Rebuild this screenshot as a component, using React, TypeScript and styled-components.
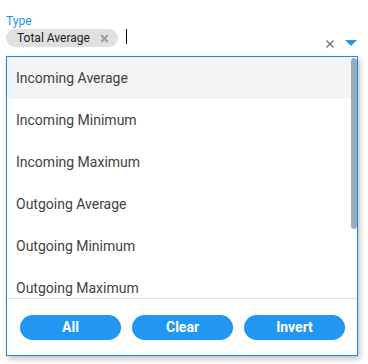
import styled, {createGlobalStyle} from 'styled-components'

const options = [
  'Incoming Average',
  'Incoming Minimum',
  'Incoming Maximum',
  'Outgoing Average',
  'Outgoing Minimum',
  'Outgoing Maximum',
  'Total Minimum',
  'Total Maximum',
]

const App = () => {

  return <Page>
    <GlobalStyle/>

    <Field>
      <Label>Type</Label>
      <InputRow>
        <Chip>
          <span>Total Average</span>
          <ChipDelete viewBox="0 0 10 10">
            <path d="M2 2 L8 8 M8 2 L2 8" stroke="#9e9e9e" strokeWidth="2.4" strokeLinecap="round"/>
          </ChipDelete>
        </Chip>
        <Caret/>
        <EndIcons>
          <svg width="10" height="10" viewBox="0 0 10 10">
            <path d="M1.5 1.5 L8.5 8.5 M8.5 1.5 L1.5 8.5" stroke="#757575" strokeWidth="1.4"/>
          </svg>
          <svg width="12" height="7" viewBox="0 0 12 7">
            <path d="M0 0 H12 L6 6 Z" fill="#2196f3"/>
          </svg>
        </EndIcons>
      </InputRow>
    </Field>

    <Popup>
      <ListArea>
        <List>
          {options.map((o, i) => <Item key={o} $active={i === 0}>{o}</Item>)}
        </List>
        <ScrollThumb/>
      </ListArea>
      <Actions>
        <ActionButton>All</ActionButton>
        <ActionButton>Clear</ActionButton>
        <ActionButton>Invert</ActionButton>
      </Actions>
    </Popup>

  </Page>
}

export default App

const GlobalStyle = createGlobalStyle`
  body {
    margin: 0;
    background: #fff;
    font-family: Roboto, "Liberation Sans", sans-serif;
  }
`

const Page = styled.div`
  width: 368px;
  height: 364px;
  padding: 14px 10px 0 6px;
  box-sizing: border-box;
`

const Field = styled.div`
  display: flex;
  flex-direction: column;
`

const Label = styled.label`
  font-size: 12px;
  line-height: 15px;
  color: #2196f3;
`

const InputRow = styled.div`
  display: flex;
  align-items: center;
  height: 18px;
`

const Chip = styled.div`
  display: flex;
  align-items: center;
  height: 18px;
  width: 112px;
  box-sizing: border-box;
  padding: 0 9px 0 11px;
  border-radius: 9px;
  background: #e0e0e0;
  font-size: 12px;
  font-weight: 400;
  color: #212121;

  span {
    flex: 1;
  }
`

const ChipDelete = styled.svg`
  width: 9px;
  height: 9px;
`

const Caret = styled.div`
  width: 1px;
  height: 15px;
  background: #000;
  margin: -3px 0 0 8px;
`

const EndIcons = styled.div`
  margin-left: auto;
  display: flex;
  align-items: center;
  gap: 10px;
  padding-top: 11px;
  padding-right: 1px;
`

const Popup = styled.div`
  margin-top: 9px;
  width: 352px;
  border: 1px solid #1e88e5;
  background: #fff;
  box-sizing: border-box;
  box-shadow: 2px 3px 6px rgba(0, 0, 0, 0.25);
  display: flex;
  flex-direction: column;
`

const ListArea = styled.div`
  position: relative;
  border-bottom: 1px solid #dddddd;
`

const List = styled.ul`
  list-style: none;
  margin: 0;
  padding: 0 6px 0 0;
  height: 241px;
  overflow: hidden;
`

const ScrollThumb = styled.div`
  position: absolute;
  top: 1px;
  right: 0;
  width: 6px;
  height: 171px;
  border-radius: 3px;
  background: #98aebf;
`

const Item = styled.li<{ $active: boolean }>`
  height: 42px;
  display: flex;
  align-items: center;
  padding-left: 9px;
  font-size: 14px;
  color: #424242;
  background: ${({$active}) => $active ? '#f4f4f4' : '#fff'};
`

const Actions = styled.div`
  display: flex;
  gap: 11px;
  padding: 16px 12px 15px 13px;
`

const ActionButton = styled.button`
  flex: 1;
  height: 25px;
  border: none;
  border-radius: 13px;
  background: #2196f3;
  color: #fff;
  font-family: Roboto, "Liberation Sans", sans-serif;
  font-size: 14px;
  line-height: 25px;
  font-weight: 700;
  padding: 0;
`
